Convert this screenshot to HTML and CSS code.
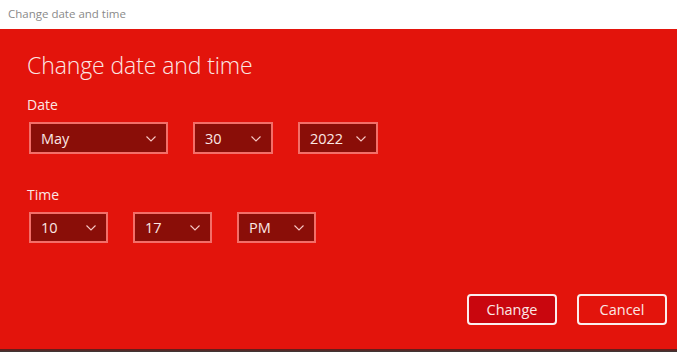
FILE: index.html
```html
<!DOCTYPE html>
<html>
<head>
<meta charset="utf-8">
<link rel="stylesheet" href="styles.css">
</head>
<body>
<div class="window">
  <div class="titlebar">Change date and time</div>
  <div class="panel">
    <h1 class="heading">Change date and time</h1>
    <div class="label">Date</div>
    <div class="row">
      <div class="select w-month"><span>May</span><svg class="chev" width="10" height="6" viewBox="0 0 10 6"><path d="M0.5 0.5 L5 5 L9.5 0.5" fill="none" stroke="#f6c9c6" stroke-width="1.1"/></svg></div>
      <div class="select w-small"><span>30</span><svg class="chev" width="10" height="6" viewBox="0 0 10 6"><path d="M0.5 0.5 L5 5 L9.5 0.5" fill="none" stroke="#f6c9c6" stroke-width="1.1"/></svg></div>
      <div class="select w-small"><span>2022</span><svg class="chev" width="10" height="6" viewBox="0 0 10 6"><path d="M0.5 0.5 L5 5 L9.5 0.5" fill="none" stroke="#f6c9c6" stroke-width="1.1"/></svg></div>
    </div>
    <div class="label label-time">Time</div>
    <div class="row">
      <div class="select w-time t"><span>10</span><svg class="chev" width="10" height="6" viewBox="0 0 10 6"><path d="M0.5 0.5 L5 5 L9.5 0.5" fill="none" stroke="#f6c9c6" stroke-width="1.1"/></svg></div>
      <div class="select w-time t"><span>17</span><svg class="chev" width="10" height="6" viewBox="0 0 10 6"><path d="M0.5 0.5 L5 5 L9.5 0.5" fill="none" stroke="#f6c9c6" stroke-width="1.1"/></svg></div>
      <div class="select w-time t"><span>PM</span><svg class="chev" width="10" height="6" viewBox="0 0 10 6"><path d="M0.5 0.5 L5 5 L9.5 0.5" fill="none" stroke="#f6c9c6" stroke-width="1.1"/></svg></div>
    </div>
    <div class="actions">
      <button class="btn btn-primary">Change</button>
      <button class="btn">Cancel</button>
    </div>
  </div>
  <div class="shadow"></div>
</div>
</body>
</html>
```

FILE: styles.css
```css
html, body {
  margin: 0;
  padding: 0;
}
body {
  width: 677px;
  height: 352px;
  overflow: hidden;
  font-family: "Open Sans", "Noto Sans", sans-serif;
  background: #e3140c;
}
.window {
  display: flex;
  flex-direction: column;
  height: 352px;
}
.titlebar {
  height: 29px;
  box-sizing: border-box;
  background: #ffffff;
  color: #8a8a8a;
  font-size: 11.5px;
  padding-left: 8px;
  padding-bottom: 1px;
  line-height: 28px;
}
.panel {
  flex: 1;
  background: #e3140c;
  padding: 21px 10px 0 27px;
  display: flex;
  flex-direction: column;
  align-items: flex-start;
}
.heading {
  margin: 0;
  font-weight: 300;
  font-size: 23px;
  line-height: 31px;
  color: #fbe7e5;
  letter-spacing: -0.1px;
}
.label {
  margin-top: 14px;
  font-size: 14px;
  line-height: 20px;
  color: #fbe7e5;
  margin-bottom: 7px;
}
.label-time {
  margin-top: 31px;
  margin-bottom: 7px;
}
.row {
  display: flex;
  gap: 25px;
  padding-left: 2px;
}
.select {
  box-sizing: border-box;
  height: 32px;
  border: 2px solid #f36f69;
  background: #8a0e08;
  color: #fbe7e5;
  font-size: 14.5px;
  display: flex;
  align-items: center;
  justify-content: space-between;
  padding: 0 10px 0 10px;
}
.select.t {
  height: 31px;
}
.w-month {
  width: 139px;
}
.w-small {
  width: 80px;
}
.w-time {
  width: 79px;
}
.chev {
  display: block;
  margin-top: 1px;
}
.actions {
  margin-top: auto;
  margin-bottom: 24px;
  align-self: flex-end;
  display: flex;
  gap: 20px;
}
.btn {
  box-sizing: border-box;
  width: 90px;
  height: 31px;
  border: 2px solid #fbeeee;
  border-radius: 4px;
  background: transparent;
  color: #fbe7e5;
  font-family: "Open Sans", "Noto Sans", sans-serif;
  font-size: 14.5px;
  padding: 0;
}
.btn-primary {
  background: #c9060e;
}
.shadow {
  height: 3px;
  background: linear-gradient(#6b1a16, #3a3a3a);
}
```
